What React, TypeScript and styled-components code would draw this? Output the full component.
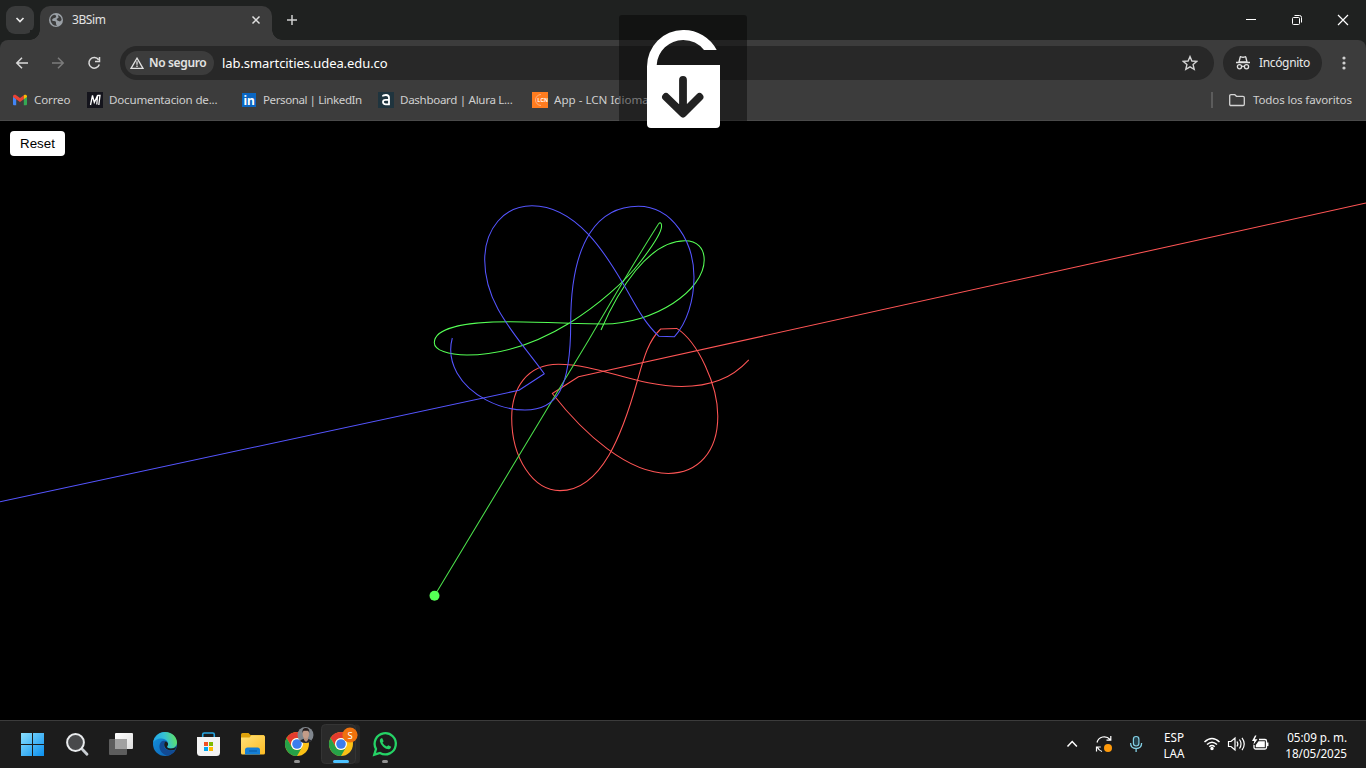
import React from 'react';
import styled, { createGlobalStyle } from 'styled-components';

const Global = createGlobalStyle`
  * { box-sizing: border-box; }
  html, body { margin: 0; background: #000; overflow: hidden; }
  body { font-family: "Noto Sans", "Open Sans", sans-serif; }
  svg { display: block; flex: none; }
`;

const Desktop = styled.div`
  position: relative;
  width: 1366px;
  height: 768px;
  display: flex;
  flex-direction: column;
  overflow: hidden;
  background: #000;
`;

const TabStrip = styled.header`
  display: flex;
  align-items: center;
  height: 40px;
  flex: none;
  padding-left: 6px;
  background: #1f2120;
`;

const TabSearch = styled.button`
  display: grid;
  place-items: center;
  width: 28px;
  height: 28px;
  padding: 0;
  border: 0;
  border-radius: 9px;
  background: #3a3b3b;
`;

const Tab = styled.div`
  position: relative;
  display: flex;
  align-items: center;
  align-self: flex-end;
  width: 232px;
  height: 34px;
  margin-left: 6px;
  padding: 0 10px 6px 9px;
  border-radius: 10px 10px 0 0;
  background: #3c3c3c;
  &::before, &::after {
    content: "";
    position: absolute;
    bottom: 0;
    width: 10px;
    height: 10px;
  }
  &::before { left: -10px; background: radial-gradient(circle at 0 0, #1f2120 9.5px, #3c3c3c 10px); }
  &::after { right: -10px; background: radial-gradient(circle at 100% 0, #1f2120 9.5px, #3c3c3c 10px); }
`;

const Label = styled.span<{ $w?: number; $size?: number; $gap?: number; $color?: string; $ls?: number; $weight?: number }>`
  flex: none;
  white-space: nowrap;
  line-height: 18px;
  width: ${p => (p.$w ? p.$w + 'px' : 'auto')};
  margin-left: ${p => p.$gap ?? 0}px;
  font-size: ${p => p.$size ?? 12}px;
  font-weight: ${p => p.$weight ?? 400};
  letter-spacing: ${p => p.$ls ?? 0}px;
  color: ${p => p.$color ?? '#dedede'};
`;

const NewTab = styled.div`
  margin-left: 15px;
`;

const WindowButtons = styled.div`
  display: flex;
  margin-left: auto;
`;

const WindowButton = styled.div`
  display: grid;
  place-items: center;
  width: 46px;
  height: 40px;
`;

const ToolbarBack = styled.div`
  flex: none;
  background: #1f2120;
`;

const Toolbar = styled.div`
  display: flex;
  align-items: flex-start;
  height: 40px;
  padding: 6px 0 0 14px;
  border-radius: 8px 8px 0 0;
  background: #3c3c3c;
`;

const NavButton = styled.div`
  display: grid;
  place-items: center;
  width: 16px;
  height: 34px;
  margin-right: 20px;
`;

const AddressBar = styled.div`
  display: flex;
  align-items: center;
  width: 1094px;
  height: 34px;
  margin-left: -2px;
  padding: 0 16px 0 5px;
  border-radius: 17px;
  background: #282828;
`;

const SecurityChip = styled.div`
  display: flex;
  align-items: center;
  width: 89px;
  height: 24px;
  padding-left: 5px;
  border-radius: 12px;
  background: #3c3c3c;
`;

const Star = styled.div`
  margin-left: auto;
`;

const Incognito = styled.div`
  display: flex;
  align-items: center;
  width: 99px;
  height: 34px;
  margin-left: 9px;
  padding-left: 12px;
  border-radius: 17px;
  background: #282828;
`;

const MenuDots = styled.div`
  display: grid;
  place-items: center;
  width: 44px;
  height: 34px;
`;

const BookmarkBar = styled.nav`
  display: flex;
  align-items: center;
  flex: none;
  height: 41px;
  padding: 0 14px 1px 13px;
  border-bottom: 1px solid #4a4a4a;
  background: #3c3c3c;
`;

const AllBookmarks = styled.div`
  display: flex;
  align-items: center;
  height: 16px;
  width: 141px;
  margin-left: auto;
  padding-left: 15px;
  border-left: 2px solid #5c5c5c;
`;

const Viewport = styled.main`
  flex: 1;
  min-height: 0;
  display: grid;
  background: #000;
  > * { grid-area: 1 / 1; }
`;

const ResetButton = styled.button`
  z-index: 1;
  margin: 10px;
  width: 55px;
  height: 25px;
  padding: 0;
  border: 0;
  border-radius: 4px;
  background: #fff;
  color: #000;
  font: 13.33px "Liberation Sans", Arial, sans-serif;
`;

const LockOverlay = styled.div`
  position: absolute;
  left: 619px;
  top: 15px;
  z-index: 2;
  width: 128px;
  height: 128px;
  border-radius: 3px;
  background: rgba(0, 0, 0, 0.42);
`;

const Taskbar = styled.footer`
  display: flex;
  flex: none;
  height: 48px;
  padding-left: 11px;
  border-top: 1px solid #3b3b3b;
  background: #1c1c1c;
`;

const AppSlot = styled.div`
  width: 44px;
  height: 47px;
`;

const Tray = styled.div`
  display: flex;
  align-items: center;
  margin-left: auto;
`;

const TrayText = styled.div<{ $w: number; $align: string; $ls?: number }>`
  width: ${p => p.$w}px;
  text-align: ${p => p.$align};
  white-space: nowrap;
  color: #fff;
  font-size: 11.7px;
  line-height: 16px;
  letter-spacing: ${p => p.$ls ?? 0}px;
`;

// Trails left by the three bodies, from their start to where they are flung out.
const blueTrail = `M452.3 338C449 350 450.5 361 457 373C470 396 500 410 525 410
  C557 410 570.7 389 570.7 323C570.7 238 600 206.2 638.3 206.2
  C673 206.2 694 243 694 277C694 300 687 323 674.3 336.8L659 336.3
  C643 322 633 300 623.3 284C608 258 578 205.7 532 205.7
  C504 205.7 484.7 229 484.7 260C484.7 305 516 335 544.3 373.8
  L519 390.3L0 501.7`;

const greenTrail = `M601 330C618 291 648 240.8 685 240.8C697 240.8 704.2 248 704.2 260
  C704.2 290 655 323.9 603.3 323.9C572 323.9 540 321.7 510 321.7
  C465 321.7 434.3 328 434.3 342.7C434.3 350 448 355 467 355
  C505 355 541 340.5 570 322.7C597 306 625 282 641 261
  C651 248 661.6 232 661.6 226C661.6 222.5 660 222 658.5 224`;

const greenEscape = 'M658.5 224C640 253 612 300 589 339.5L434.5 595.7';

const redTrail = `M748.8 359.8C731 379 710 386.5 681.7 386.5C637 386.5 598 364.2 558.3 364.2
  C527 364.2 511.7 388 511.7 418C511.7 458 533 490.6 560 490.6
  C602 490.6 623 432 637.3 381C643.5 359 648 341 660.7 329L676.7 328.4
  C698 342 717.8 385 717.8 416C717.8 452 698 473.4 668.3 473.4
  C628 473.4 584 434 552.3 393.5L578.5 376.8L1366 203`;

const ChromeLogo = () => (
  <g>
    <circle cx="12" cy="12" r="12" fill="#fbc116" />
    <path d="M1.6 6a12 12 0 0 1 20.8 0H12a6 6 0 0 0-5.2 9z" fill="#e33b2e" />
    <path d="M1.6 6a12 12 0 0 0 10.4 18l5.2-9A6 6 0 0 1 6.8 15z" fill="#26a148" />
    <circle cx="12" cy="12" r="6" fill="#fff" />
    <circle cx="12" cy="12" r="4.8" fill="#3b7ded" />
  </g>
);

const bookmarks = [
  { name: 'Correo', w: 53, ls: -0.15, gap: 7, icon: (
    <svg width="14" height="16" viewBox="0 0 14 16">
      <path d="M0 4.5 3.2 7v6.2H1q-1 0-1-1z" fill="#4285f4" />
      <path d="M10.8 7 14 4.5v7.7q0 1-1 1h-2.2z" fill="#34a853" />
      <path d="M0 4.5C0 2.6 2 2.4 3.2 3.2L7 6l3.8-2.8v4L7 10 0 4.9z" fill="#ea4335" />
      <path d="M10.8 3.2C12.2 2.3 14 2.7 14 4.5v.4l-3.2 2.3z" fill="#fbbc04" />
    </svg>) },
  { name: 'Documentacion de...', w: 132, ls: -0.2, gap: 6, icon: (
    <svg width="16" height="16"><rect width="16" height="16" fill="#14141c" /><path d="M3.5 13 5.5 3.5 7.3 10.5 10.8 3.5M7.3 10.5 10.5 3.5 9.8 12.5M10.5 3.5h2.5l-1.2 9.5" fill="none" stroke="#fff" strokeWidth="1.3" /></svg>) },
  { name: 'Personal | LinkedIn', w: 115, ls: -0.44, gap: 6, icon: (
    <svg width="16" height="16"><rect x="1" y="1" width="14" height="14" fill="#0a66c2" /><text x="2.4" y="12.5" fill="#fff" fontFamily="Noto Sans" fontWeight="700" fontSize="12">in</text></svg>) },
  { name: 'Dashboard | Alura L...', w: 132, ls: -0.32, gap: 6, icon: (
    <svg width="16" height="16"><rect width="16" height="16" fill="#1f343e" /><path d="M4.8 4.4q0-1.4 3.2-1.4 3 0 3 2.8v6.5h-3.2q-2.8 0-2.8-2.2T7.5 7.9H11" fill="none" stroke="#fff" strokeWidth="1.8" /></svg>) },
  { name: 'App - LCN Idiomas', w: 110, ls: 0, gap: 6, icon: (
    <svg width="16" height="16"><rect width="16" height="16" fill="#ff7c1f" /><path d="M9 2.5A5.5 5.5 0 1 0 9 13.5" fill="none" stroke="#ffb27d" strokeWidth="1" /><text x="5.5" y="10" fill="#fff" fontFamily="Liberation Sans" fontWeight="700" fontSize="5">LCN</text></svg>) },
];

export default function App() {
  return (
    <Desktop>
      <Global />
      <TabStrip>
        <TabSearch><svg width="10" height="10"><path d="M1.5 3 5 6.5 8.5 3" fill="none" stroke="#e8e8e8" strokeWidth="1.7" /></svg></TabSearch>
        <Tab>
          <svg width="14" height="14"><circle cx="7" cy="7" r="7" fill="#9aa0a6" /><path d="M5.2 1.7q2 .2 2 1.6T5.5 5 3.2 6.4q-.5 1.5 2 1.5 2.2.2 1.8 1.8T8 12.7q-2.2.3-4.3-1.3T1.4 6.5 5.2 1.7M9 2q3.6 1.5 3.6 5L11 8.4 8.4 7.5 7.5 5.9 9.6 4.8z" fill="#3c3c3c" /></svg>
          <Label $w={179} $gap={9} $ls={-0.4} $color="#e3e3e3">3BSim</Label>
          <svg width="10" height="10"><path d="m1.5 1.5 7 7m0-7-7 7" stroke="#e0e0e0" strokeWidth="1.5" /></svg>
        </Tab>
        <NewTab><svg width="10" height="10"><path d="M5 0v10M0 5h10" stroke="#d0d0d0" strokeWidth="1.5" /></svg></NewTab>
        <WindowButtons>
          <WindowButton><svg width="10" height="10"><path d="M0 4.5h10" stroke="#fff" /></svg></WindowButton>
          <WindowButton><svg width="10" height="10"><rect x=".5" y="2.5" width="7" height="7" rx="1" fill="none" stroke="#fff" /><path d="M2.5.5H7.5Q9.5.5 9.5 2.5V7.5" fill="none" stroke="#fff" /></svg></WindowButton>
          <WindowButton><svg width="12" height="12"><path d="m1 1 10 10m0-10-10 10" stroke="#fff" strokeWidth="1.2" /></svg></WindowButton>
        </WindowButtons>
      </TabStrip>
      <ToolbarBack>
        <Toolbar>
          <NavButton><svg width="14" height="14"><path d="M13 7H2M7 1.8 1.8 7 7 12.2" fill="none" stroke="#dadada" strokeWidth="1.5" /></svg></NavButton>
          <NavButton><svg width="14" height="14"><path d="M1 7h11M7 1.8 12.2 7 7 12.2" fill="none" stroke="#7c7c7c" strokeWidth="1.5" /></svg></NavButton>
          <NavButton><svg width="14" height="14"><path d="M11.6 3.8A5.3 5.3 0 1 0 12.3 8.5M12.5 1v4.6H8" fill="none" stroke="#dadada" strokeWidth="1.5" /></svg></NavButton>
          <AddressBar>
            <SecurityChip>
              <svg width="14" height="12"><path d="M7 1.2 13 11.3H1z" fill="none" stroke="#e0e0e0" strokeWidth="1.3" /><path d="M7 4.2v3.5M7 8.5v1.4" stroke="#e0e0e0" strokeWidth="1.3" /></svg>
              <Label $gap={5} $weight={600} $ls={-0.35} $color="#e3e3e3">No seguro</Label>
            </SecurityChip>
            <Label $gap={8} $size={13} $color="#fff" $ls={-0.08}>lab.smartcities.udea.edu.co</Label>
            <Star><svg width="16" height="16"><path d="M8 1.6 9.9 6l4.8.4-3.6 3.2 1.1 4.7L8 11.8l-4.2 2.5 1.1-4.7L1.3 6.4 6.1 6z" fill="none" stroke="#d4d4d4" strokeWidth="1.4" /></svg></Star>
          </AddressBar>
          <Incognito>
            <svg width="16" height="16"><path d="M1 7.5h14" stroke="#e0e0e0" strokeWidth="1.5" /><path d="M4 7 5.2 2.2q.3-.7 1-.4L8 2.3l1.8-.5q.7-.3 1 .4L12 7z" fill="none" stroke="#e0e0e0" strokeWidth="1.4" /><circle cx="4.5" cy="11.7" r="2.1" fill="none" stroke="#e0e0e0" strokeWidth="1.3" /><circle cx="11.5" cy="11.7" r="2.1" fill="none" stroke="#e0e0e0" strokeWidth="1.3" /><path d="M6.700 11.300h2.600" stroke="#e0e0e0" strokeWidth="1.200" /></svg>
            <Label $gap={8} $ls={-0.35} $color="#e8e8e8">Incógnito</Label>
          </Incognito>
          <MenuDots><svg width="4" height="14"><g fill="#d0d0d0"><circle cx="2" cy="2" r="1.6" /><circle cx="2" cy="7" r="1.6" /><circle cx="2" cy="12" r="1.6" /></g></svg></MenuDots>
        </Toolbar>
      </ToolbarBack>
      <BookmarkBar>
        {bookmarks.map(b => (
          <React.Fragment key={b.name}>
            {b.icon}
            <Label $w={b.w} $gap={b.gap} $size={11.6} $ls={b.ls} $color="#cfcfcf">{b.name}</Label>
          </React.Fragment>
        ))}
        <AllBookmarks>
          <svg width="18" height="14"><path d="M1.7 3q0-1.3 1.3-1.3h3.8l1.7 1.6H15q1.3 0 1.3 1.3v6.6q0 1.3-1.3 1.3H3q-1.3 0-1.3-1.3z" fill="none" stroke="#d4d4d4" strokeWidth="1.3" /></svg>
          <Label $gap={7} $size={11.6} $ls={-0.16} $color="#cfcfcf">Todos los favoritos</Label>
        </AllBookmarks>
      </BookmarkBar>
      <Viewport>
        <ResetButton>Reset</ResetButton>
        <svg width="1366" height="599" viewBox="0 121 1366 599" fill="none" strokeWidth="1.05" strokeLinejoin="round">
          <path d={redTrail} stroke="#f55" />
          <path d={greenEscape} stroke="#4be04b" />
          <path d={greenTrail} stroke="#5f5" />
          <path d={blueTrail} stroke="#55f" />
          <circle cx="434.5" cy="595.7" r="5" fill="#5f5" />
        </svg>
      </Viewport>
      <Taskbar>
        <AppSlot><svg width="44" height="47">
          <defs><linearGradient id="win" x1="10" y1="12" x2="33" y2="35" gradientUnits="userSpaceOnUse"><stop stopColor="#8ae0ff" /><stop offset="1" stopColor="#0a8fee" /></linearGradient></defs>
          <path d="M10 12h11v11H10zM22 12h11v11H22zM10 24h11v11H10zM22 24h11v11H22z" fill="url(#win)" /></svg></AppSlot>
        <AppSlot><svg width="44" height="47"><path d="m27.5 28.5 4.5 4.8" stroke="#c9ced3" strokeWidth="2.8" strokeLinecap="round" /><circle cx="20.5" cy="21.5" r="8.4" fill="#48494b" stroke="#e9ebed" strokeWidth="2" /></svg></AppSlot>
        <AppSlot><svg width="44" height="47"><defs><linearGradient id="tv" x2="1" y2="1"><stop stopColor="#fff" /><stop offset="1" stopColor="#dcdcdc" /></linearGradient></defs><rect x="16" y="12" width="18" height="16" rx="1" fill="url(#tv)" /><rect x="10" y="18" width="18" height="16" rx="1" fill="#5d5d5d" /><path d="M16 18h12v10H16z" fill="#a1a1a1" /></svg></AppSlot>
        <AppSlot><svg width="44" height="47">
          <defs><linearGradient id="edgeTop" x1="0" y1=".5" x2="1" y2=".3"><stop stopColor="#20a5e8" /><stop offset=".5" stopColor="#35c1d5" /><stop offset="1" stopColor="#62e35c" /></linearGradient><linearGradient id="edgeSide" x2="1" y2="1"><stop stopColor="#1494df" /><stop offset="1" stopColor="#0c5db0" /></linearGradient></defs>
          <g transform="translate(10 11)">
            <circle cx="12" cy="12" r="12" fill="url(#edgeSide)" />
            <path d="M0 11C.8 4.5 6 0 12 0c7.5 0 12 5.3 12 10.5 0 3.5-2.8 6-6.2 6-3 0-4.3-1.3-3.6-2.3C17 10.5 13 6.5 8.5 6.5 4.5 6.5 1 8.5 0 11z" fill="url(#edgeTop)" />
            <path d="M8.5 9.5c-5 5 0 14 7 14 4-1.3 6-3.5 7-5.7-5 2-10.5.2-11.5-3.2-.4-2 .1-4.5 2.5-5.3-2-.8-3.8-.8-5 .2z" fill="#124a93" />
            <path d="M11.2 12.5c0-2 1.5-3.2 2.3-2.8 1.9 1 2.2 3 .7 4.5-.7 1.2.8 2.3 3.6 2.3 3 0 4.5-.8 5.4-2.2l-.9 3.3c-4.5 1.8-11.1.4-11.1-5.1z" fill="#1c1c1c" />
          </g></svg></AppSlot>
        <AppSlot><svg width="44" height="47"><path d="M15.7 17v-3.5q0-1.5 1.5-1.5h8.6q1.5 0 1.5 1.5V17" fill="none" stroke="#27a7e2" strokeWidth="1.6" /><path d="M10 16h23v15.5q0 3.5-3.5 3.5h-16Q10 35 10 31.5z" fill="#f3f3f3" /><path d="M17 21h4v4h-4z" fill="#f25022" /><path d="M22 21h4v4h-4z" fill="#7fba00" /><path d="M17 26h4v4h-4z" fill="#00a4ef" /><path d="M22 26h4v4h-4z" fill="#ffb900" /></svg></AppSlot>
        <AppSlot><svg width="44" height="47"><defs><linearGradient id="fold" x2="1" y2="1"><stop stopColor="#ffe27a" /><stop offset="1" stopColor="#fdbb22" /></linearGradient></defs><path d="M10 13.5q0-1.5 1.5-1.5h6l2 2H33v4H10z" fill="#dda10a" /><path d="M10 16.5h8.5l2-2.2H32.5q1.5 0 1.5 1.5V32q0 1.5-1.5 1.5h-21Q10 33.5 10 32z" fill="url(#fold)" /><path d="M14 33.5V29q0-2.5 2.5-2.5h10q2.5 0 2.5 2.5v4.5z" fill="#147fd6" /><path d="M18 30h8" stroke="#0b61ac" strokeWidth="1.3" /></svg></AppSlot>
        <AppSlot><svg width="44" height="47"><g transform="translate(10 11)"><ChromeLogo /></g>
          <clipPath id="avatar"><circle cx="30.5" cy="14" r="8" /></clipPath>
          <g clipPath="url(#avatar)"><rect x="22" y="6" width="17" height="17" fill="#80868d" /><path d="M24 23q1-5 5-5h3q5 0 6 5z" fill="#25262c" /><path d="M29 16h4v3l-2 2-2-2z" fill="#b78f7c" /><ellipse cx="30.8" cy="13" rx="3.2" ry="4.5" fill="#c49c88" /><path d="M27.5 12q-.7-5 3.3-5t3.5 5l-1-2.3h-4.8z" fill="#231b1b" /></g>
          <rect x="19" y="39" width="6" height="3" rx="1.5" fill="#929292" /></svg></AppSlot>
        <AppSlot><svg width="44" height="47" overflow="visible"><path d="M36 3.5h1.5q3.5 0 3.5 3.5v32q0 3.5-3.5 3.5H36" fill="#282828" /><rect x="2.5" y="3.5" width="34" height="39" rx="4" fill="#2a2a2a" stroke="#343434" /><g transform="translate(10 11)"><ChromeLogo /></g><circle cx="31" cy="14" r="7.6" fill="#f0720d" /><text x="31" y="17.7" textAnchor="middle" fontSize="9.5" fontFamily="Noto Sans" fill="#fff">S</text><rect x="14" y="39" width="16" height="3" rx="1.5" fill="#4cc2ff" /></svg></AppSlot>
        <AppSlot><svg width="44" height="47"><path d="M11.3 33.7 13 28A10.6 10.6 0 1 1 17 32z" fill="none" stroke="#25d366" strokeWidth="2.3" /><path d="M18.2 17.2q-1.7 1-1.4 3 .8 3.4 3.6 5.7 2.7 2.5 5.8 2.3 1.7-.5 2-2.4l-2.9-1.6-1.5 1.4q-2.8-1.2-4.3-3.9l1.1-1.5-1.3-2.9z" fill="#25d366" /><rect x="19" y="39" width="6" height="3" rx="1.5" fill="#929292" /></svg></AppSlot>
        <Tray>
          <svg width="100" height="47" fill="none" stroke="#fff">
            <path d="m15.5 25.5 4.7-5 4.7 5" strokeWidth="1.5" />
            <path d="M45 21.5a7.5 7.5 0 0 1 13-3M58.8 15v4.2h-4.3M50 30.5a7.5 7.5 0 0 1-4.5-4M44.5 30.5V26h4.3" strokeWidth="1.2" />
            <circle cx="56" cy="27" r="4" fill="#ff9a0b" stroke="none" />
            <rect x="81.4" y="15.5" width="5.5" height="9.5" rx="2.7" stroke="#83cfe4" strokeWidth="1.2" fill="#25404a" /><path d="M78.6 22q0 5.5 5.5 5.5t5.5-5.5M84.1 27.5v3.5" stroke="#83cfe4" strokeWidth="1.3" />
          </svg>
          <TrayText $w={44} $align="center">ESP<br />LAA</TrayText>
          <svg width="78" height="47" fill="none" stroke="#fff">
            <g strokeWidth="1.5"><path d="M8.5 21q7.5-7 15 0M11 23.5q5-4.6 10 0M13.3 25.8q2.7-2.5 5.4 0" /><circle cx="16" cy="27.5" r="1" fill="#fff" /></g>
            <path d="M32.5 20.5h2.5l4-3.5v12l-4-3.5h-2.5zM41 20.5q1.7 2.5 0 5M43.5 18.5q3 4.5 0 9M46 16.8q4.5 6.2 0 12.4" strokeWidth="1.2" />
            <path d="M63 18.5h6q1.500 0 1.500 1.500v6.500q0 1.500-1.500 1.500H59.500q-1.500 0-1.500-1.500V24" strokeWidth="1.300" /><path d="M59.800 24 62.500 20.200H68.800v6.100h-9z" fill="#fff" stroke="none" /><path d="M71.700 21.500v3.600" strokeWidth="1.500" /><path d="m59 14.500-3 5.500h2.300l-1 4 4.200-5.800h-2.800l1.800-3.700z" fill="#fff" stroke="none" />
          </svg>
          <TrayText $w={73} $align="right" $ls={-0.05}>05:09 p. m.<br />18/05/2025</TrayText>
          <svg width="19" height="1" />
        </Tray>
      </Taskbar>
      <LockOverlay>
        <svg width="128" height="128"><path d="M28 51.5A36 36.5 0 0 1 64 15A37 37 0 0 1 97.7 35H85A26.5 26.5 0 0 0 64 25A26.5 26.5 0 0 0 37.7 50H101V109q0 4-4 4H32q-4 0-4-4z" fill="#fff" /><path d="M64 65v32.5M47 82l17 16.5 16.5-16.5" fill="none" stroke="#222" strokeWidth="7.8" strokeLinecap="round" strokeLinejoin="round" /></svg>
      </LockOverlay>
    </Desktop>
  );
}
